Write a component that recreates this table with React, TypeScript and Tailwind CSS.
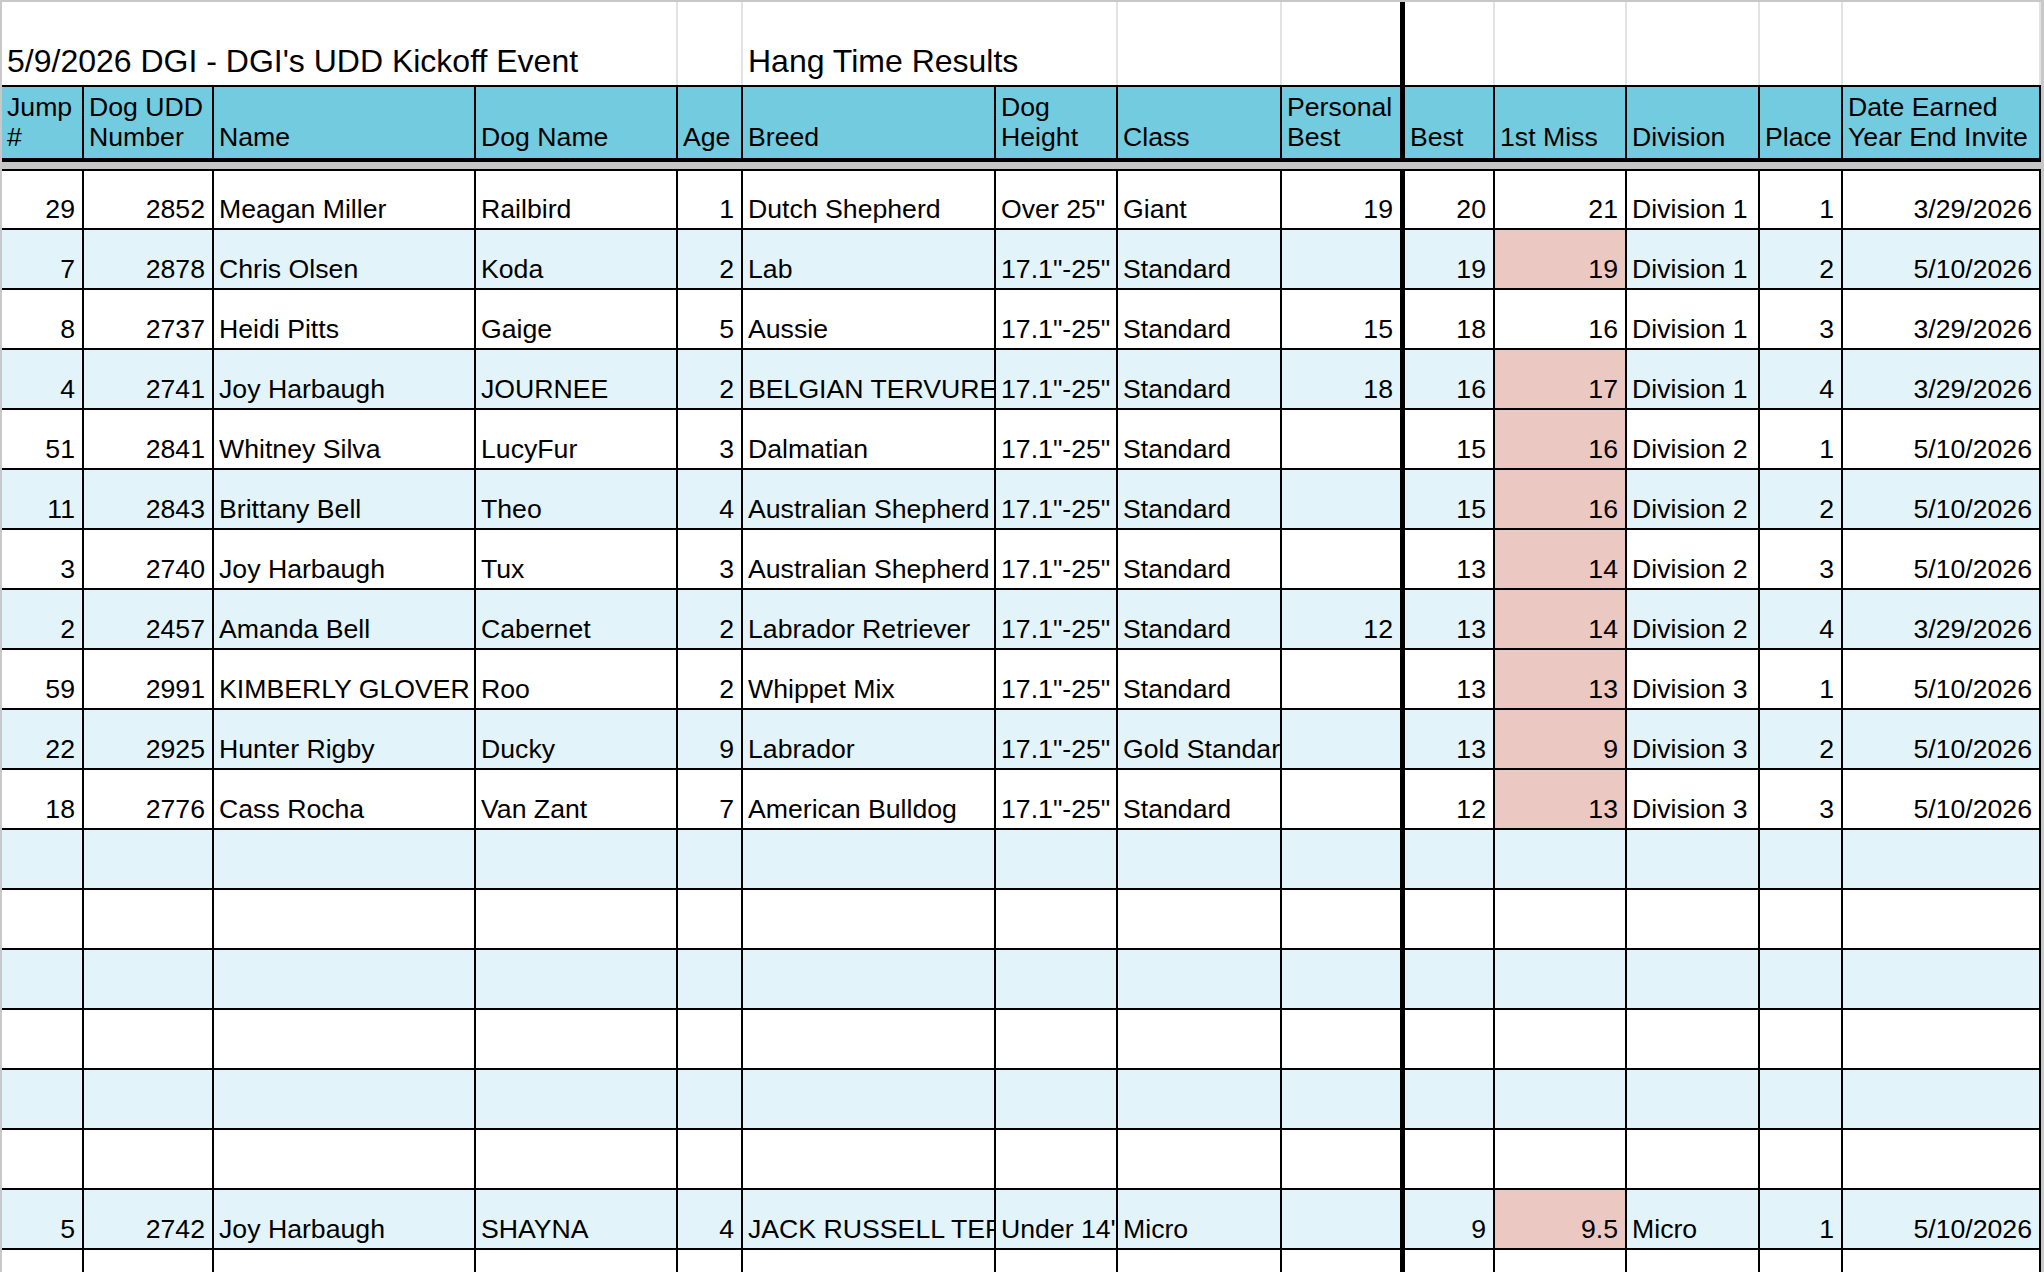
import React from 'react'

// Hang Time results sheet, drawn as a plain CSS grid
const COLS =
  'grid-cols-[82px_130px_262px_202px_65px_253px_122px_164px_123px_90px_132px_133px_83px_198px]'

type Align = 'l' | 'r'

const ALIGN: Align[] = ['r', 'r', 'l', 'l', 'r', 'l', 'l', 'l', 'r', 'r', 'r', 'l', 'r', 'r']

const HEADERS: React.ReactNode[] = [
  <>Jump<br />#</>,
  <>Dog UDD<br />Number</>,
  'Name',
  'Dog Name',
  'Age',
  'Breed',
  <>Dog<br />Height</>,
  'Class',
  <>Personal<br />Best</>,
  'Best',
  '1st Miss',
  'Division',
  'Place',
  <>Date Earned<br />Year End Invite</>,
]

type Row = { cells: string[]; miss?: boolean }

const H = '17.1"-25"'

const ROWS: Row[] = [
  { cells: ['29', '2852', 'Meagan Miller', 'Railbird', '1', 'Dutch Shepherd', 'Over 25"', 'Giant', '19', '20', '21', 'Division 1', '1', '3/29/2026'] },
  { cells: ['7', '2878', 'Chris Olsen', 'Koda', '2', 'Lab', H, 'Standard', '', '19', '19', 'Division 1', '2', '5/10/2026'], miss: true },
  { cells: ['8', '2737', 'Heidi Pitts', 'Gaige', '5', 'Aussie', H, 'Standard', '15', '18', '16', 'Division 1', '3', '3/29/2026'] },
  { cells: ['4', '2741', 'Joy Harbaugh', 'JOURNEE', '2', 'BELGIAN TERVUREN', H, 'Standard', '18', '16', '17', 'Division 1', '4', '3/29/2026'], miss: true },
  { cells: ['51', '2841', 'Whitney Silva', 'LucyFur', '3', 'Dalmatian', H, 'Standard', '', '15', '16', 'Division 2', '1', '5/10/2026'], miss: true },
  { cells: ['11', '2843', 'Brittany Bell', 'Theo', '4', 'Australian Shepherd', H, 'Standard', '', '15', '16', 'Division 2', '2', '5/10/2026'], miss: true },
  { cells: ['3', '2740', 'Joy Harbaugh', 'Tux', '3', 'Australian Shepherd', H, 'Standard', '', '13', '14', 'Division 2', '3', '5/10/2026'], miss: true },
  { cells: ['2', '2457', 'Amanda Bell', 'Cabernet', '2', 'Labrador Retriever', H, 'Standard', '12', '13', '14', 'Division 2', '4', '3/29/2026'], miss: true },
  { cells: ['59', '2991', 'KIMBERLY GLOVER', 'Roo', '2', 'Whippet Mix', H, 'Standard', '', '13', '13', 'Division 3', '1', '5/10/2026'], miss: true },
  { cells: ['22', '2925', 'Hunter Rigby', 'Ducky', '9', 'Labrador', H, 'Gold Standard', '', '13', '9', 'Division 3', '2', '5/10/2026'], miss: true },
  { cells: ['18', '2776', 'Cass Rocha', 'Van Zant', '7', 'American Bulldog', H, 'Standard', '', '12', '13', 'Division 3', '3', '5/10/2026'], miss: true },
  ...Array.from({ length: 6 }, () => ({ cells: Array(14).fill('') })),
  { cells: ['5', '2742', 'Joy Harbaugh', 'SHAYNA', '4', 'JACK RUSSELL TERRIER', 'Under 14"', 'Micro', '', '9', '9.5', 'Micro', '1', '5/10/2026'], miss: true },
  { cells: Array(14).fill('') },
]

function TitleCell({ span, last, children }: { span?: string; last?: boolean; children?: React.ReactNode }) {
  return (
    <div
      className={`flex items-end overflow-visible whitespace-nowrap pb-[5px] pl-[5px] text-[32px] leading-[1.15] ${span ?? ''} ${
        last ? 'border-r-[5px] border-black' : 'border-r-2 border-[#e2e2e2]'
      }`}
    >
      {children}
    </div>
  )
}

function TitleRow() {
  return (
    <div className={`grid h-[83px] bg-white ${COLS}`}>
      <TitleCell span="col-span-4">5/9/2026 DGI - DGI's UDD Kickoff Event</TitleCell>
      <TitleCell />
      <TitleCell span="col-span-2">Hang Time Results</TitleCell>
      <TitleCell />
      <TitleCell last />
      <TitleCell />
      <TitleCell />
      <TitleCell />
      <TitleCell />
      <TitleCell />
    </div>
  )
}

function HeaderRow() {
  return (
    <div className={`grid h-[77px] border-t-2 border-b-4 border-black bg-[#72cbdf] ${COLS}`}>
      {HEADERS.map((h, i) => (
        <div
          key={i}
          className={`flex items-end overflow-hidden whitespace-nowrap pb-[5px] pl-[5px] leading-[30.6px] ${
            i === 8 ? 'border-r-[5px]' : 'border-r-2'
          } border-black`}
        >
          <span>{h}</span>
        </div>
      ))}
    </div>
  )
}

function DataRow({ row, index }: { row: Row; index: number }) {
  const stripe = index % 2 === 1 ? 'bg-[#e2f4f9]' : 'bg-white'
  const first = index === 0
  return (
    <div className={`grid shrink-0 border-b-2 border-black ${first ? 'h-[61px] border-t-2' : 'h-[60px]'} ${COLS}`}>
      {row.cells.map((c, i) => {
        const bg = i === 10 && row.miss ? 'bg-[#ecc8c2]' : stripe
        return (
          <div
            key={i}
            className={`flex items-end overflow-hidden whitespace-nowrap pb-[3px] leading-[30.6px] ${bg} ${
              ALIGN[i] === 'r' ? 'justify-end pr-[7px]' : 'justify-start pl-[5px]'
            } ${i === 8 ? 'border-r-[5px]' : 'border-r-2'} border-black`}
          >
            {c}
          </div>
        )
      })}
    </div>
  )
}

export default function App() {
  return (
    <div className="h-[1272px] w-[2044px] overflow-hidden bg-[#c8c8c8] pl-[2px] pt-[2px] font-['Liberation_Sans',Arial,sans-serif] text-[26.67px] text-black">
      <div className="flex w-[2039px] flex-col">
        <TitleRow />
        <HeaderRow />
        <div className="h-[7px] w-[2042px] bg-[#c6c6c6]" />
        {ROWS.map((r, i) => (
          <DataRow key={i} row={r} index={i} />
        ))}
      </div>
    </div>
  )
}
